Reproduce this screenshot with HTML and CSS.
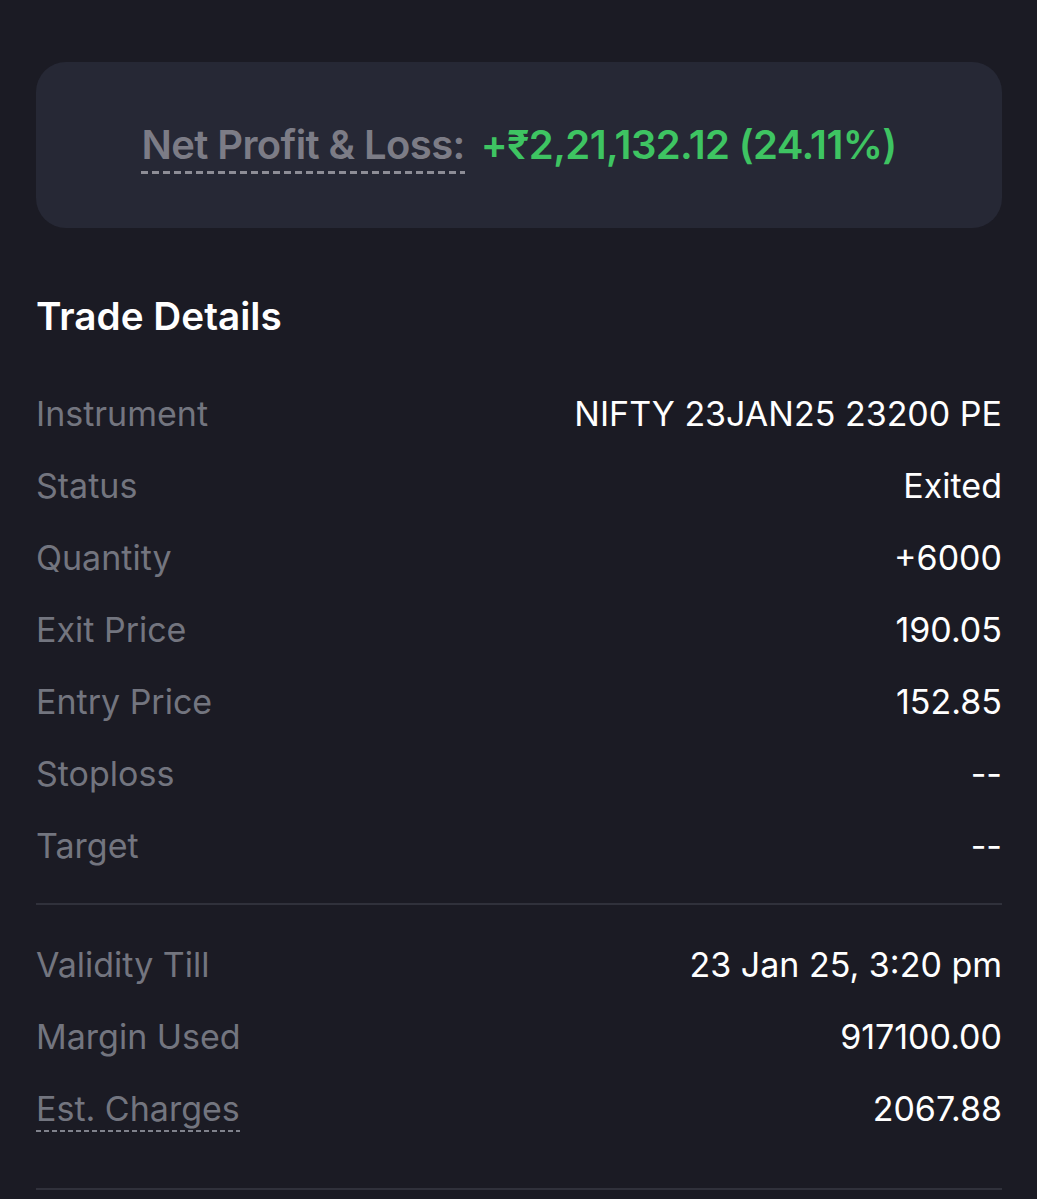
FILE: index.html
```html
<!DOCTYPE html>
<html>
<head>
<meta charset="utf-8">
<link rel="stylesheet" href="styles.css">
</head>
<body>
<div class="page">
  <div class="pnl-card">
    <div class="pnl-line">
      <span class="pnl-label">Net Profit &amp; Loss:</span>
      <span class="pnl-value">+₹2,21,132.12 (24.11%)</span>
    </div>
  </div>

  <h2 class="section-title">Trade Details</h2>

  <div class="rows">
    <div class="row"><span class="label">Instrument</span><span class="value">NIFTY 23JAN25 23200 PE</span></div>
    <div class="row"><span class="label">Status</span><span class="value">Exited</span></div>
    <div class="row"><span class="label">Quantity</span><span class="value">+6000</span></div>
    <div class="row"><span class="label">Exit Price</span><span class="value">190.05</span></div>
    <div class="row"><span class="label">Entry Price</span><span class="value">152.85</span></div>
    <div class="row"><span class="label">Stoploss</span><span class="value">--</span></div>
    <div class="row"><span class="label">Target</span><span class="value">--</span></div>
  </div>

  <div class="divider"></div>

  <div class="rows rows-second">
    <div class="row"><span class="label">Validity Till</span><span class="value">23 Jan 25, 3:20 pm</span></div>
    <div class="row"><span class="label">Margin Used</span><span class="value">917100.00</span></div>
    <div class="row"><span class="label"><span class="dashed">Est. Charges</span></span><span class="value">2067.88</span></div>
  </div>

  <div class="divider divider-bottom"></div>
</div>
</body>
</html>
```

FILE: styles.css
```css
html, body {
  margin: 0;
  padding: 0;
  background: #1b1b24;
}

body {
  font-family: Inter, "Noto Sans", "DejaVu Sans", sans-serif;
  color: #ffffff;
}

.page {
  padding: 62px 35px 0 36px;
}

.pnl-card {
  height: 166px;
  background: #262835;
  border-radius: 30px;
  display: flex;
  align-items: center;
  justify-content: center;
}

.pnl-line {
  display: flex;
  align-items: baseline;
  gap: 16px;
  font-size: 40px;
  font-weight: 600;
  letter-spacing: -0.6px;
  margin-top: 4px;
}

.pnl-label {
  color: #7c7c86;
  padding-bottom: 5px;
  background-image: linear-gradient(to right, #8d8d96 64%, transparent 64%);
  background-size: 11px 3px;
  background-repeat: repeat-x;
  background-position: 0 100%;
}

.pnl-value {
  color: #3ec462;
}

.section-title {
  margin: 66px 0 39px;
  font-size: 38.7px;
  line-height: 44px;
  font-weight: 600;
  color: #ffffff;
}

.rows {
  display: flex;
  flex-direction: column;
}

.row {
  height: 72px;
  display: flex;
  align-items: center;
  justify-content: space-between;
  font-size: 34px;
}

.label {
  color: #73757f;
}

.value {
  color: #ffffff;
}

.dashed {
  padding-bottom: 3px;
  background-image: linear-gradient(to right, #80828c 62%, transparent 62%);
  background-size: 8px 2px;
  background-repeat: repeat-x;
  background-position: 0 100%;
}

.divider {
  height: 2px;
  background: #30313b;
  margin: 22px 0 23px;
}

.divider-bottom {
  margin: 44px 0 0;
}
```
